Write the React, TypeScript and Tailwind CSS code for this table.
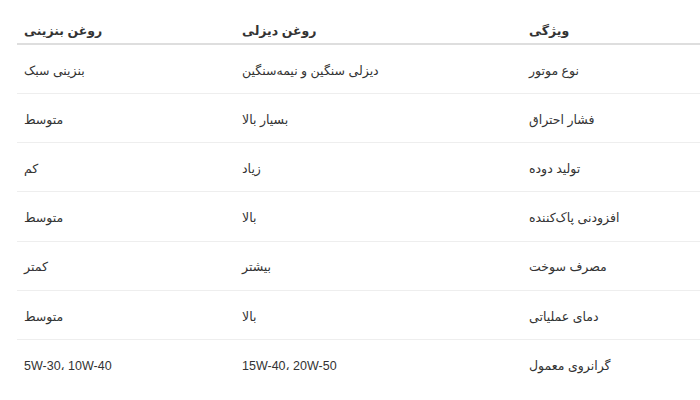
import React from "react";

const rows: [string, string, string][] = [
  ["نوع موتور", "دیزلی سنگین و نیمه‌سنگین", "بنزینی سبک"],
  ["فشار احتراق", "بسیار بالا", "متوسط"],
  ["تولید دوده", "زیاد", "کم"],
  ["افزودنی پاک‌کننده", "بالا", "متوسط"],
  ["مصرف سوخت", "بیشتر", "کمتر"],
  ["دمای عملیاتی", "بالا", "متوسط"],
  ["گرانروی معمول", "15W-40، 20W-50", "5W-30، 10W-40"],
];

export default function App() {
  return (
    <div
      className="w-[700px] h-[400px] bg-white overflow-hidden pl-[17px] pt-[17px]"
      style={{ fontFamily: '"Liberation Sans", "DejaVu Sans", Tahoma, sans-serif' }}
    >
      <table dir="rtl" className="w-[683px] border-collapse text-[12.5px] text-[#333]">
        <thead>
          <tr className="border-b-2 border-[#dedede]">
            <th className="w-[173px] h-[27px] text-left font-bold pl-[2px] pt-[5px] align-top">ویژگی</th>
            <th className="w-[290px] text-left font-bold pl-[5px] pt-[5px] align-top">روغن دیزلی</th>
            <th className="text-left font-bold pl-[7px] pt-[5px] align-top">روغن بنزینی</th>
          </tr>
        </thead>
        <tbody>
          {rows.map((r, i) => (
            <tr
              key={i}
              className={
                i < rows.length - 1
                  ? "border-b border-[#eeeeee] h-[49.3px]"
                  : "h-[49.3px]"
              }
            >
              <td className="text-left pl-[2px] pt-[4px]">{r[0]}</td>
              <td className="text-left pl-[5px] pt-[4px]">{r[1]}</td>
              <td className="text-left pl-[7px] pt-[4px]">{r[2]}</td>
            </tr>
          ))}
        </tbody>
      </table>
    </div>
  );
}
